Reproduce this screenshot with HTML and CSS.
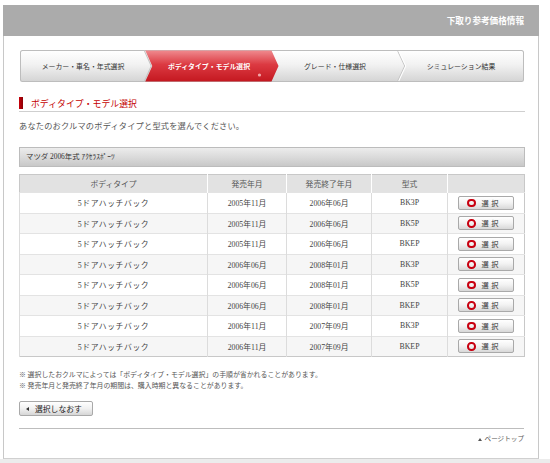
FILE: index.html
```html
<!DOCTYPE html>
<html lang="ja">
<head>
<meta charset="utf-8">
<title>下取り参考価格情報</title>
<link rel="stylesheet" href="styles.css">
</head>
<body>
<div class="page">
  <div class="frame">
    <div class="header">下取り参考価格情報</div>
    <div class="content">
      <div class="steps">
        <svg class="steps-bg" viewBox="0 0 503 32" preserveAspectRatio="none" aria-hidden="true">
          <defs>
            <linearGradient id="sg" x1="0" y1="0" x2="0" y2="1">
              <stop offset="0" stop-color="#ffffff"/>
              <stop offset="0.45" stop-color="#f2f2f2"/>
              <stop offset="1" stop-color="#d4d4d4"/>
            </linearGradient>
            <linearGradient id="rg" x1="0" y1="0" x2="0" y2="1">
              <stop offset="0" stop-color="#ef8a8e"/>
              <stop offset="0.45" stop-color="#dc3a42"/>
              <stop offset="1" stop-color="#c41820"/>
            </linearGradient>
          </defs>
          <rect x="0.5" y="0.5" width="502" height="31" rx="2" fill="url(#sg)" stroke="#bdbdbd"/>
          <polyline points="124,0.5 131,16 124,31.5" fill="none" stroke="#c4c4c4"/>
          <polygon points="125,0.5 251,0.5 258,16 251,31.5 125,31.5 132,16" fill="url(#rg)"/>
          <polyline points="377,1 384,16 377,31" fill="none" stroke="#c4c4c4"/>
          <polyline points="378,1 385,16 378,31" fill="none" stroke="#ffffff"/>
          <circle cx="239" cy="25" r="1.6" fill="#f2a6a8"/>
        </svg>
        <div class="step">メーカー・車名・年式選択</div>
        <div class="step active">ボディタイプ・モデル選択</div>
        <div class="step">グレード・仕様選択</div>
        <div class="step">シミュレーション結果</div>
      </div>

      <h2 class="title"><span class="bar"></span>ボディタイプ・モデル選択</h2>
      <p class="lead">あなたのおクルマのボディタイプと型式を選んでください。</p>

      <div class="car">マツダ 2006年式 ｱｸｾﾗｽﾎﾟｰﾂ</div>

      <table class="models">
        <colgroup>
          <col class="c1"><col class="c2"><col class="c3"><col class="c4"><col class="c5">
        </colgroup>
        <thead>
          <tr><th>ボディタイプ</th><th>発売年月</th><th>発売終了年月</th><th>型式</th><th></th></tr>
        </thead>
        <tbody>
          <tr><td class="jp">5ドアハッチバック</td><td>2005年11月</td><td>2006年06月</td><td>BK3P</td><td><button class="sel" type="button"><span class="ring"></span>選択</button></td></tr>
          <tr><td class="jp">5ドアハッチバック</td><td>2005年11月</td><td>2006年06月</td><td>BK5P</td><td><button class="sel" type="button"><span class="ring"></span>選択</button></td></tr>
          <tr><td class="jp">5ドアハッチバック</td><td>2005年11月</td><td>2006年06月</td><td>BKEP</td><td><button class="sel" type="button"><span class="ring"></span>選択</button></td></tr>
          <tr><td class="jp">5ドアハッチバック</td><td>2006年06月</td><td>2008年01月</td><td>BK3P</td><td><button class="sel" type="button"><span class="ring"></span>選択</button></td></tr>
          <tr><td class="jp">5ドアハッチバック</td><td>2006年06月</td><td>2008年01月</td><td>BK5P</td><td><button class="sel" type="button"><span class="ring"></span>選択</button></td></tr>
          <tr><td class="jp">5ドアハッチバック</td><td>2006年06月</td><td>2008年01月</td><td>BKEP</td><td><button class="sel" type="button"><span class="ring"></span>選択</button></td></tr>
          <tr><td class="jp">5ドアハッチバック</td><td>2006年11月</td><td>2007年09月</td><td>BK3P</td><td><button class="sel" type="button"><span class="ring"></span>選択</button></td></tr>
          <tr><td class="jp">5ドアハッチバック</td><td>2006年11月</td><td>2007年09月</td><td>BKEP</td><td><button class="sel" type="button"><span class="ring"></span>選択</button></td></tr>
        </tbody>
      </table>

      <div class="notes">
        <p>※ 選択したおクルマによっては「ボディタイプ・モデル選択」の手順が省かれることがあります。</p>
        <p>※ 発売年月と発売終了年月の期間は、購入時期と異なることがあります。</p>
      </div>

      <button class="back" type="button"><span class="tri"></span>選択しなおす</button>

      <div class="foot"><span class="up"></span>ページトップ</div>
    </div>
  </div>
  <div class="strip"></div>
</div>
</body>
</html>
```

FILE: styles.css
```css
* { box-sizing: border-box; }

body {
  margin: 0;
  background: #ffffff;
  font-family: "Noto Sans CJK JP", sans-serif;
  color: #333;
}

.page {
  padding-top: 5px;
}

.frame {
  margin-left: 3px;
  width: 536px;
  height: 454px;
  border-left: 1px solid #c8c8c8;
  border-right: 1px solid #c8c8c8;
  border-bottom: 1px solid #d0d0d0;
  background: #fff;
}

.header {
  height: 31px;
  margin-left: -1px;
  margin-right: -1px;
  background: #ababab;
  color: #fff;
  font-weight: bold;
  font-size: 8.6px;
  line-height: 31px;
  text-align: right;
  padding-right: 15px;
}

.content {
  padding: 14px 13px 0 15px;
}

/* steps */
.steps {
  position: relative;
  height: 32px;
  margin: 0 1px;
  display: flex;
}

.steps-bg {
  position: absolute;
  left: 0;
  top: 0;
  width: 100%;
  height: 100%;
}

.step {
  position: relative;
  flex: 1 1 0;
  text-align: center;
  font-size: 6.9px;
  line-height: 32px;
  color: #333;
}

.step.active {
  color: #fff;
  font-weight: bold;
}

/* title */
.title {
  margin: 13px 0 0;
  height: 17px;
  display: flex;
  align-items: center;
  gap: 8px;
  border-bottom: 1px solid #cfcfcf;
  font-size: 8.9px;
  font-weight: normal;
  color: #c40000;
}

.bar {
  width: 4px;
  height: 12px;
  background: linear-gradient(to right, #c8000a, #8a0006);
}

.lead {
  margin: 9px 0 0;
  line-height: 12px;
  font-size: 8.2px;
  letter-spacing: 0.2px;
  color: #555;
  font-family: "Liberation Serif", "Noto Sans CJK JP", serif;
}

.car {
  margin-top: 14px;
  height: 20px;
  border: 1px solid #bcbcbc;
  background: linear-gradient(to bottom, #ececec, #d9d9d9 55%, #c8c8c8);
  font-size: 7.4px;
  line-height: 18px;
  padding-left: 6px;
  color: #333;
  font-family: "Liberation Serif", "Noto Sans CJK JP", serif;
}

/* table */
.models {
  margin-top: 7px;
  width: 505px;
  border-collapse: collapse;
  table-layout: fixed;
  border: 1px solid #c8c8c8;
  font-family: "Liberation Serif", "Noto Sans CJK JP", serif;
}

.c1 { width: 188px; }
.c2 { width: 79px; }
.c3 { width: 85px; }
.c4 { width: 76px; }
.c5 { width: 77px; }

.models th {
  height: 18px;
  background: #e2e2e2;
  font-weight: normal;
  font-size: 7.8px;
  color: #555;
  border-left: 1px solid #fff;
  padding: 0;
  font-family: "Noto Sans CJK JP", sans-serif;
}

.models th:first-child { border-left: none; }

.models td {
  height: 20.5px;
  padding: 0;
  text-align: center;
  font-size: 7.8px;
  color: #444;
  border-left: 1px solid #dcdcdc;
  border-top: 1px solid #e3e3e3;
}

.models td.jp {
  letter-spacing: 0.6px;
}

.models tbody tr:nth-child(even) td {
  background: #f6f6f6;
}

.sel {
  display: inline-flex;
  align-items: center;
  justify-content: center;
  gap: 6px;
  width: 56px;
  height: 14px;
  margin: 0;
  padding: 0 4px 0 0;
  border: 1px solid #a9a9a9;
  border-radius: 2px;
  background: linear-gradient(to bottom, #ffffff, #f2f2f2 50%, #d8d8d8);
  font-family: "Noto Sans CJK JP", sans-serif;
  font-size: 7.2px;
  letter-spacing: 2.5px;
  color: #333;
  vertical-align: middle;
}

.ring {
  width: 8.5px;
  height: 8.5px;
  border: 2px solid #c80010;
  border-radius: 50%;
}

/* notes */
.notes {
  margin-top: 11.5px;
  font-size: 6.9px;
  line-height: 11px;
  color: #555;
  font-family: "Liberation Serif", "Noto Sans CJK JP", serif;
}

.notes p { margin: 0; }

.back {
  display: flex;
  align-items: center;
  gap: 6px;
  margin: 10.5px 0 0;
  width: 74px;
  height: 15px;
  padding: 0 0 0 6px;
  border: 1px solid #a9a9a9;
  border-radius: 2px;
  background: linear-gradient(to bottom, #ffffff, #f1f1f1 50%, #d6d6d6);
  font-family: "Noto Sans CJK JP", sans-serif;
  font-size: 7.8px;
  color: #222;
}

.tri {
  width: 0;
  height: 0;
  border-top: 2.5px solid transparent;
  border-bottom: 2.5px solid transparent;
  border-right: 3px solid #333;
}

.foot {
  margin-top: 12px;
  border-top: 1px solid #bdbdbd;
  padding-top: 5px;
  width: 505px;
  display: flex;
  justify-content: flex-end;
  align-items: center;
  gap: 3px;
  line-height: 10px;
  font-size: 6.6px;
  color: #555;
  font-family: "Liberation Serif", "Noto Sans CJK JP", serif;
}

.up {
  width: 0;
  height: 0;
  border-left: 2px solid transparent;
  border-right: 2px solid transparent;
  border-bottom: 3px solid #555;
}

.strip {
  height: 4px;
  background: #ececec;
}
```
